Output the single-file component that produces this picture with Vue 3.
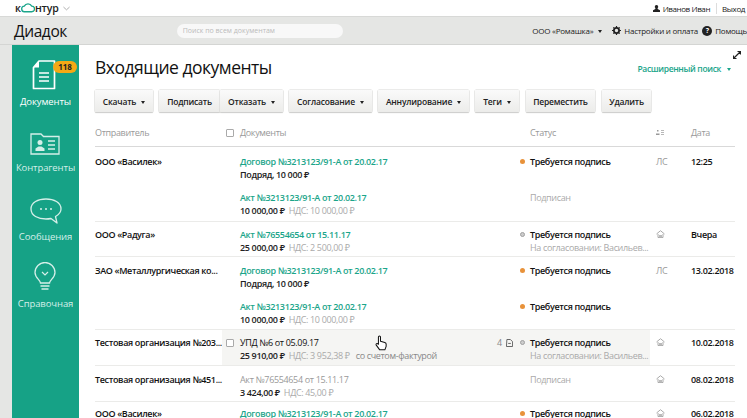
<script setup>
const buttons = [
  { label: 'Скачать', caret: true, w: 58, gap: 6 },
  { label: 'Подписать', w: 61, gap: 0 },
  { label: 'Отказать', caret: true, w: 63, gap: 6 },
  { label: 'Согласование', caret: true, w: 83, gap: 6 },
  { label: 'Аннулирование', caret: true, w: 91, gap: 6 },
  { label: 'Теги', caret: true, w: 44, gap: 7 },
  { label: 'Переместить', w: 69, gap: 7 },
  { label: 'Удалить', w: 49, gap: 0 }
]
const contract = { title: 'Договор №3213123/91-А от 20.02.17', main: 'Подряд, 10 000 ₽', link: true }
const act = { title: 'Акт №3213123/91-А от 20.02.17', main: '10 000,00 ₽', vat: 'НДС: 10 000,00 ₽', link: true }
const rows = [
  { sender: 'ООО «Василек»', route: 'ЛС', date: '12:25', h: 75, pad: 8, docs: [
    { ...contract, status: 'Требуется подпись', dot: 'orange' },
    { ...act, status: 'Подписан', muted: true }
  ] },
  { sender: 'ООО «Радуга»', route: 'home', date: 'Вчера', h: 35, pad: 6, docs: [
    { title: 'Акт №76554654 от 15.11.17', main: '25 000,00 ₽', vat: 'НДС: 2 500,00 ₽', link: true, status: 'Требуется подпись', dot: 'grey', note: 'На согласовании: Васильев...' }
  ] },
  { sender: 'ЗАО «Металлургическая ко...', route: 'ЛС', date: '13.02.2018', h: 73, pad: 7, docs: [
    { ...contract, status: 'Требуется подпись', dot: 'orange' },
    { ...act, status: 'Требуется подпись', dot: 'orange' }
  ] },
  { sender: 'Тестовая организация №203...', route: 'home', date: '10.02.2018', h: 36, pad: 6, hover: true, docs: [
    { title: 'УПД №6 от 05.09.17', main: '25 910,00 ₽', vat: 'НДС: 3 952,38 ₽', extra: 'со счетом-фактурой', status: 'Требуется подпись', dot: 'grey', note: 'На согласовании: Васильев...' }
  ] },
  { sender: 'Тестовая организация №451...', route: 'home', date: '08.02.2018', h: 36, pad: 7, docs: [
    { title: 'Акт №76554654 от 15.11.17', main: '3 424,00 ₽', vat: 'НДС: 45,00 ₽', grey: true, status: 'Подписан', muted: true }
  ] },
  { sender: 'ООО «Василек»', route: 'home', date: '06.02.2018', h: 36, pad: 5, docs: [
    { ...contract, status: 'Требуется подпись', dot: 'orange' }
  ] }
]
</script>

<template>
  <div class="page">
    <div class="topbar">
      <div class="logo">
        <span>к</span>
        <svg class="logo-cloud" viewBox="0 0 15 10" width="14" height="10"><path d="M4 9a3 3 0 0 1-.5-6A4.500 4.500 0 0 1 11.500 3a3 3 0 0 1 0 6z" fill="none" stroke="#1ba58a" stroke-width="1.400"/></svg>
        <span>нтур</span>
        <svg class="logo-chev" viewBox="0 0 8 5" width="7" height="5"><path d="M.5.8 4 4 7.500.8" fill="none" stroke="#999" stroke-width=".9"/></svg>
      </div>
      <div class="user">
        <svg viewBox="0 0 8 8" width="7" height="7"><path d="M4 0a2 2 0 0 1 1.300 3.500v1L8 6v2H0V6l2.700-1.500v-1A2 2 0 0 1 4 0z" fill="#222"/></svg>
        <span>Иванов Иван</span>
        <i class="sep"></i>
        <span>Выход</span>
      </div>
    </div>
    <div class="header">
      <div class="brand">Диадок</div>
      <div class="search">Поиск по всем документам</div>
      <div class="header-right">
        <span class="org">ООО «Ромашка»<b class="caret"></b></span>
        <span class="hitem settings">
          <svg viewBox="0 0 10 10" width="9" height="9"><circle cx="5" cy="5" r="2.900" fill="none" stroke="#222" stroke-width="2"/><path d="M5 0v2M5 8v2M0 5h2M8 5h2M1.500 1.500l1.400 1.400M7.100 7.100l1.400 1.400M1.500 8.500l1.400-1.400M7.100 2.900l1.400-1.400" stroke="#222" stroke-width="1.300"/></svg>
          Настройки и оплата
        </span>
        <span class="hitem">
          <span class="qm">?</span>
          Помощь
        </span>
      </div>
    </div>
    <div class="body">
      <nav class="sidebar">
        <a class="nav-item first">
          <span class="nav-icon">
            <svg viewBox="0 0 24 30" width="24" height="30"><path d="M7 1h15.500v27.500h-21V7.500z" fill="none" stroke="#fff" stroke-width="1.700" stroke-linejoin="round"/><path d="M7 1v6.500H1.500z" fill="#fff"/><path d="M7 13h10M7 17h10M7 21h10" stroke="#fff" stroke-width="1.500"/></svg>
            <span class="badge">118</span>
          </span>
          <span class="nav-label strong">Документы</span>
        </a>
        <a class="nav-item contr">
          <span class="nav-icon">
            <svg viewBox="0 0 30 22" width="30" height="22"><path d="M1 21V1h10l2.500 2.500H29V21z" fill="none" stroke="#d5efe9" stroke-width="1.300"/><circle cx="10" cy="9.500" r="2.500" fill="#d5efe9"/><path d="M5.500 18v-2.500l3-2h3l3 2V18z" fill="#d5efe9"/><path d="M18 8h7M18 12h7M18 16h7" stroke="#d5efe9" stroke-width="1.500"/></svg>
          </span>
          <span class="nav-label">Контрагенты</span>
        </a>
        <a class="nav-item msg">
          <span class="nav-icon">
            <svg viewBox="0 0 32 26" width="32" height="26"><path d="M16 1C8 1 1 4.500 1 11s7 10 15 10c2 0 3.500-.2 5-.5l6 4.500-1.500-6.500C29 16.500 31 14 31 11 31 4.500 24 1 16 1z" fill="none" stroke="#d5efe9" stroke-width="1.300" stroke-linejoin="round"/><circle cx="11" cy="11" r="1" fill="#d5efe9"/><circle cx="16" cy="11" r="1" fill="#d5efe9"/><circle cx="21" cy="11" r="1" fill="#d5efe9"/></svg>
          </span>
          <span class="nav-label">Сообщения</span>
        </a>
        <a class="nav-item help-item">
          <span class="nav-icon">
            <svg viewBox="0 0 22 30" width="22" height="30"><path d="M6.500 21c0-3-5.500-5-5.500-10.500a10 10 0 0 1 20 0C21 16 15.500 18 15.500 21z" fill="none" stroke="#d5efe9" stroke-width="1.300"/><path d="M8 10l3 3 3-3" fill="none" stroke="#d5efe9" stroke-width="1.200"/><path d="M6.500 24h9M7.500 27h7" stroke="#d5efe9" stroke-width="1.700"/></svg>
          </span>
          <span class="nav-label">Справочная</span>
        </a>
      </nav>
      <main class="content">
        <svg class="expand" viewBox="0 0 8 8" width="8" height="8"><path d="M1 7l6-6M4.500.5h3v3M.5 4.500v3h3" fill="none" stroke="#222" stroke-width="1.200"/></svg>
        <div class="title-row">
          <h1>Входящие документы</h1>
          <a class="adv">Расширенный поиск<b class="caret teal"></b></a>
        </div>
        <div class="toolbar">
          <button v-for="b in buttons" :key="b.label" class="btn" :style="{ width: b.w + 'px', marginRight: b.gap + 'px' }">
            {{ b.label }}<b v-if="b.caret" class="caret"></b>
          </button>
        </div>
        <div class="thead">
          <span class="c-sender">Отправитель</span>
          <span class="c-check"><i class="check"></i></span>
          <span class="c-doc">Документы</span>
          <span class="c-status">Статус</span>
          <span class="c-route sort">
            <svg viewBox="0 0 8 7" width="8" height="7"><path d="M1 2.500V1h1.500v1.500zM0 6V4.500h3.500V6z" fill="#999"/><path d="M5 1.500h3M5 3.500h3M5 5.500h3" stroke="#999" stroke-width=".7"/></svg>
          </span>
          <span class="c-date">Дата</span>
        </div>
        <div v-for="(r, ri) in rows" :key="ri" class="row" :style="{ height: r.h + 'px', '--pad': r.pad + 'px' }">
          <div class="c-sender sender">{{ r.sender }}</div>
          <div class="docs">
            <div v-for="(d, di) in r.docs" :key="di" class="doc" :class="{ hover: r.hover }">
              <span class="c-check"><i v-if="r.hover" class="check"></i></span>
              <div class="c-doc">
                <div class="doc-title" :class="{ link: d.link, grey: d.grey }">{{ d.title }}</div>
                <div class="doc-sub"><b>{{ d.main }}</b><span v-if="d.vat" class="vat">{{ d.vat }}</span><span v-if="d.extra" class="vat extra">{{ d.extra }}</span></div>
              </div>
              <span v-if="r.hover" class="count">4
                <svg viewBox="0 0 8 9" width="7" height="8"><path d="M1 .5h4L7.500 3v5.500H.5z" fill="none" stroke="#555" stroke-width="1"/><path d="M2.500 5h3" stroke="#555"/></svg>
              </span>
              <div class="c-status">
                <div class="st" :class="{ muted: d.muted }"><i v-if="d.dot" class="dot" :class="d.dot"></i>{{ d.status }}</div>
                <div v-if="d.note" class="note">{{ d.note }}</div>
              </div>
            </div>
          </div>
          <div class="c-route route">
            <template v-if="r.route === 'ЛС'">ЛС</template>
            <svg v-else viewBox="0 0 9 8" width="9" height="8"><path d="M.5 4 4.500.7 8.500 4M2 4v3.500h5V4" fill="none" stroke="#aaa" stroke-width="1"/><path d="M3 5h3v2.500H3z" fill="#bbb"/></svg>
          </div>
          <div class="c-date date">{{ r.date }}</div>
        </div>
        <svg class="cursor" viewBox="0 0 14 18" width="12" height="16"><path d="M4 9V2a1.200 1.200 0 0 1 2.400 0v5l5 1.300c1 .3 1.600 1 1.600 2V13l-1.500 4H5.500L1.500 11.500c-1-1.500.8-2.800 2.500-1z" fill="#fff" stroke="#111" stroke-width="1.200" stroke-linejoin="round"/></svg>
      </main>
    </div>
  </div>
</template>

<style>
html, body { margin: 0; background: #fff; overflow: hidden; }
</style>

<style scoped>
.page { width: 747px; height: 418px; overflow: hidden; font-family: "Open Sans", "Noto Sans", sans-serif; color: #111; font-size: 9px; letter-spacing: -.35px; background: #e5e6e4; display: flex; flex-direction: column; }
.topbar { height: 16px; flex: none; background: #fff; display: flex; justify-content: space-between; align-items: center; padding: 0 2px 0 15px; }
.logo { display: flex; align-items: center; font-size: 10.500px; font-weight: 600; letter-spacing: -.1px; color: #222; }
.logo-chev { margin-left: 4px; }
.user { display: flex; align-items: center; gap: 3px; font-size: 8px; letter-spacing: -.4px; color: #222; }
.sep { width: 1px; height: 11px; background: #ddd; margin: 0 2px 0 3px; }
.header { height: 29px; flex: none; display: flex; align-items: center; padding-left: 14px; border-top: 1px solid #d8d9d7; border-bottom: 1px solid #d4d5d3; box-sizing: border-box; white-space: nowrap; }
.brand { font-size: 15.500px; letter-spacing: -.4px; color: #111; width: 163px; }
.search { width: 167px; height: 14px; line-height: 14px; background: #f8f8f8; border-radius: 7px; color: #bbb; font-size: 7px; letter-spacing: 0; padding-left: 6px; box-sizing: border-box; }
.header-right { margin-left: 189px; display: flex; align-items: center; font-size: 8px; letter-spacing: -.25px; color: #222; }
.org { width: 80px; flex: none; }
.hitem { display: inline-flex; align-items: center; gap: 3px; flex: none; }
.settings { width: 90px; }
.qm { width: 10px; height: 10px; border-radius: 50%; background: #222; color: #fff; font-size: 7px; font-weight: 700; line-height: 10px; text-align: center; }
.caret { display: inline-block; width: 0; height: 0; border: 2.500px solid transparent; border-top: 3px solid currentColor; border-bottom: 0; margin-left: 5px; vertical-align: 1px; }
.caret.teal { color: #1ba58a; margin-left: 6px; }
.body { flex: 1; display: flex; padding-left: 12px; min-height: 0; }
.sidebar { width: 67px; flex: none; background: #16a286; display: flex; flex-direction: column; align-items: center; color: #d5efe9; }
.nav-item { display: flex; flex-direction: column; align-items: center; flex: none; }
.nav-icon { position: relative; display: flex; align-items: flex-start; justify-content: center; }
.nav-label { font-size: 9.500px; letter-spacing: -.1px; line-height: 13px; white-space: nowrap; }
.nav-label.strong { color: #fff; }
.first { padding-top: 15px; height: 88px; box-sizing: border-box; margin-left: -3px; }
.first .nav-icon { height: 35px; }
.first .nav-label { margin-left: 3px; }
.contr { height: 65px; }
.contr .nav-icon { height: 28px; }
.msg { height: 64px; }
.msg .nav-icon { height: 32px; }
.help-item .nav-icon { height: 35px; }
.badge { position: absolute; left: 21px; top: 1px; height: 12px; line-height: 12px; width: 24px; border-radius: 6px; background: #f5a915; color: #222; font-size: 8px; letter-spacing: 0; font-weight: 700; text-align: center; }
.content { flex: 1; position: relative; background: #fff; padding-left: 16px; min-width: 0; }
.expand { position: absolute; top: 6px; right: 6px; }
.title-row { display: flex; justify-content: space-between; align-items: center; height: 45px; padding-right: 16px; }
h1 { margin: 0 0 1px; font-size: 17.500px; letter-spacing: -.5px; font-weight: 400; color: #111; white-space: nowrap; }
.adv { color: #1ba58a; font-size: 8.500px; font-weight: 600; margin-top: 2px; }
.toolbar { display: flex; height: 22px; }
.btn { height: 22px; padding: 0; border: 0; border-radius: 1px; background: linear-gradient(#fafafa, #ececea); box-shadow: 0 0 0 .5px #d8d8d6, 0 1px 1px #c4c4c2; font: 600 8.500px "Open Sans", sans-serif; letter-spacing: -.2px; color: #222; white-space: nowrap; flex: none; }
.thead { display: flex; align-items: center; height: 35px; border-bottom: 1px solid #d9d9d9; margin-right: 12px; box-sizing: border-box; color: #999; font-size: 9px; padding-top: 7px; }
.c-sender { width: 131px; flex: none; white-space: nowrap; }
.c-check { width: 14px; flex: none; display: flex; }
.c-doc { width: 290px; flex: none; }
.c-status { width: 126px; flex: none; }
.c-route { width: 35px; flex: none; }
.c-date { flex: 1; white-space: nowrap; }
.check { display: block; width: 6px; height: 6px; border: 1px solid #aaa; border-radius: 1px; background: #fff; }
.row { display: flex; align-items: flex-start; border-bottom: 1px solid #ebebe9; margin-right: 12px; box-sizing: border-box; position: relative; white-space: nowrap; }
.sender { font-weight: 600; padding-top: calc(var(--pad) + 1px); line-height: 12px; color: #111; }
.docs { flex: none; width: 430px; display: flex; flex-direction: column; }
.doc { display: flex; height: 36px; padding-top: var(--pad); box-sizing: border-box; position: relative; margin-left: -4px; padding-left: 4px; }
.doc.hover { background: #f5f5f3; height: 35px; width: 428px; }
.doc .c-check { padding-top: 3px; }
.doc-title { line-height: 13px; color: #111; }
.doc-title.link { color: #1ba58a; font-weight: 600; }
.doc-title.grey { color: #999; }
.doc-sub { line-height: 13px; }
.doc-sub b { font-weight: 600; color: #222; }
.vat { color: #aaa; margin-left: 4px; }
.extra { color: #888; margin-left: 6px; }
.count { position: absolute; left: 275px; top: 6px; color: #888; display: flex; align-items: center; gap: 4px; line-height: 13px; }
.st { font-weight: 600; line-height: 13px; position: relative; color: #111; }
.st.muted { color: #aaa; font-weight: 400; }
.dot { position: absolute; left: -10px; top: 4px; width: 5px; height: 5px; border-radius: 50%; }
.dot.orange { background: #e8923a; }
.dot.grey { background: #ccc; box-sizing: border-box; border: 1px solid #a0a0a0; width: 5px; height: 5px; }
.note { color: #aaa; line-height: 13px; }
.route { color: #999; padding-top: calc(var(--pad) + 1px); line-height: 12px; }
.date { font-weight: 600; padding-top: calc(var(--pad) + 1px); line-height: 12px; color: #111; }
.cursor { position: absolute; left: 296px; top: 290px; }
</style>
